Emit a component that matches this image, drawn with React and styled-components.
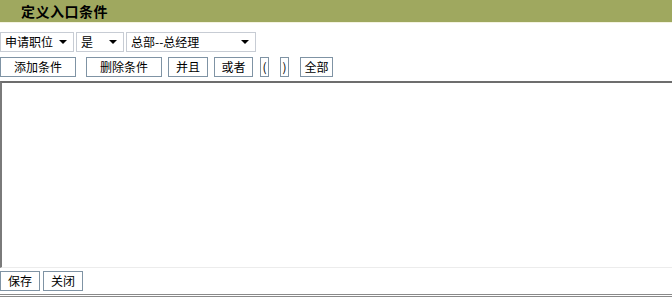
import React from "react";
import styled, { createGlobalStyle } from "styled-components";

const GlobalStyle = createGlobalStyle`
	html, body {
		margin: 0;
		padding: 0;
		background: #ffffff;
		overflow: hidden;
	}
	body {
		font-family: "Noto Sans CJK SC", "Liberation Sans", sans-serif;
		font-size: 12px;
		color: #000;
	}
`;

const Page = styled.div`
	width: 672px;
	height: 300px;
	display: flex;
	flex-direction: column;
`;

const Header = styled.div`
	height: 22px;
	background: #9fa85f;
	display: flex;
	align-items: center;
	padding-left: 21px;
	font-size: 14px;
	font-weight: bold;
	letter-spacing: 0.5px;
	border-bottom: 1px solid #f4f3e0;
`;

const SelectRow = styled.div`
	display: flex;
	gap: 2px;
	margin-top: 9px;
	height: 20px;
`;

const Select = styled.div`
	box-sizing: border-box;
	width: ${(p) => p.$w}px;
	height: 20px;
	border: 1px solid #c7ccd4;
	display: flex;
	align-items: center;
	justify-content: space-between;
	padding: 0 6px 0 4px;
	font-size: 12px;
	line-height: 1;
`;

const Arrow = styled.span`
	width: 0;
	height: 0;
	border-left: 4px solid transparent;
	border-right: 4px solid transparent;
	border-top: 4px solid #000;
`;

const ButtonRow = styled.div`
	display: flex;
	margin-top: 5px;
	height: 20px;
`;

const Button = styled.div`
	box-sizing: border-box;
	width: ${(p) => p.$w}px;
	margin-left: ${(p) => p.$ml || 0}px;
	height: 20px;
	border: 1px solid #7f93a4;
	display: flex;
	align-items: center;
	justify-content: center;
	font-size: 12px;
	line-height: 1;
	background: #fff;
`;

const Editor = styled.div`
	box-sizing: border-box;
	margin-top: 4px;
	height: 187px;
	width: 680px;
	border-top: 2px solid #6d6d6d;
	border-left: 2px solid #7a7a7a;
	border-bottom: 1px solid #ececec;
`;

const Footer = styled.div`
	display: flex;
	gap: 3px;
	margin-top: 3px;
	height: 20px;
`;

const BottomRule = styled.div`
	margin-top: 3px;
	height: 1px;
	border-top: 1px solid #8a8a8a;
	border-bottom: 1px solid #8a8a8a;
`;

const App = () => {
	return (
		<Page>
			<GlobalStyle />
			<Header>定义入口条件</Header>
			<SelectRow>
				<Select $w={74}>
					申请职位<Arrow />
				</Select>
				<Select $w={48}>
					是<Arrow />
				</Select>
				<Select $w={130}>
					总部--总经理<Arrow />
				</Select>
			</SelectRow>
			<ButtonRow>
				<Button $w={76}>添加条件</Button>
				<Button $w={76} $ml={10}>删除条件</Button>
				<Button $w={40} $ml={6}>并且</Button>
				<Button $w={39} $ml={6}>或者</Button>
				<Button $w={9} $ml={7}>(</Button>
				<Button $w={9} $ml={11}>)</Button>
				<Button $w={33} $ml={11}>全部</Button>
			</ButtonRow>
			<Editor />
			<Footer>
				<Button $w={40}>保存</Button>
				<Button $w={40}>关闭</Button>
			</Footer>
			<BottomRule />
		</Page>
	);
};

export default App;
